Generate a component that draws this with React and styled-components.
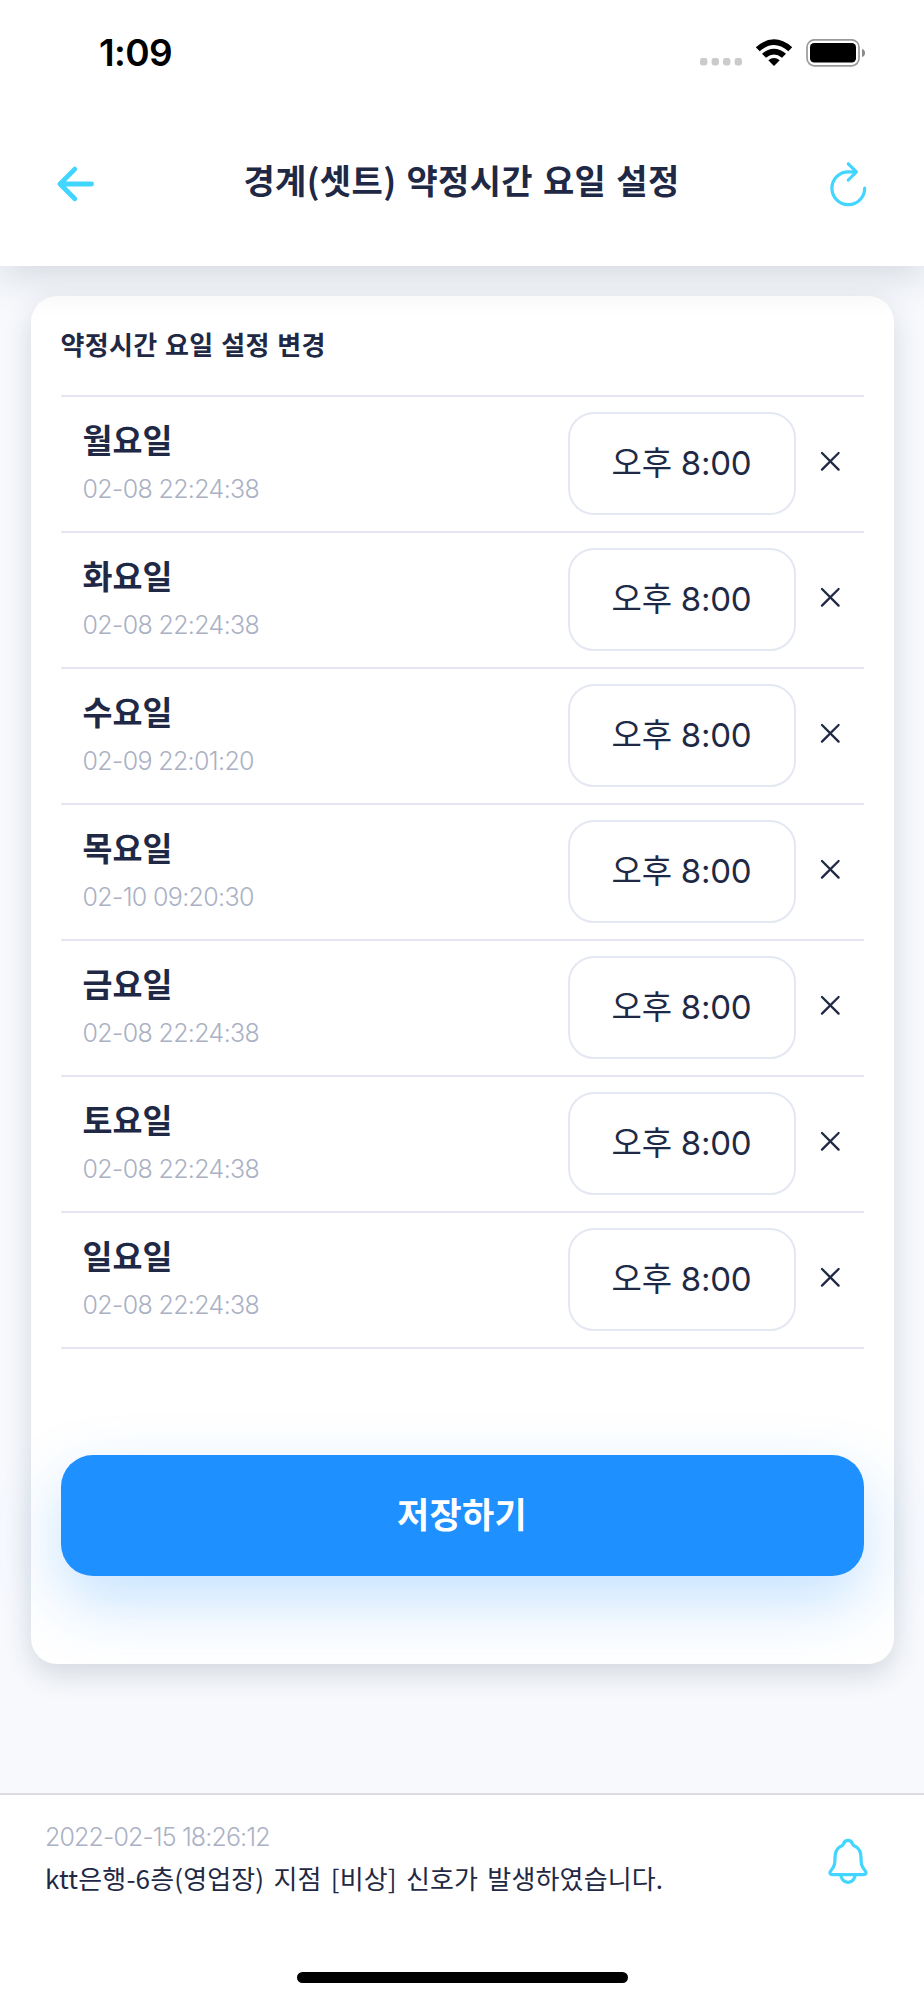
import React from 'react';
import styled, { createGlobalStyle } from 'styled-components';

const GlobalStyle = createGlobalStyle`
  body {
    margin: 0;
    background-color: #f7f9fd;
  }
  * {
    box-sizing: border-box;
  }
`;

const Screen = styled.div`
  display: flex;
  flex-direction: column;
  width: 924px;
  height: 2000px;
  overflow: hidden;
  color: #1f2945;
  background-color: #f7f9fd;
  font-family: 'Noto Sans CJK KR', 'Noto Sans', sans-serif;
`;

const Top = styled.header`
  position: relative;
  z-index: 1;
  height: 266px;
  background-color: #fff;
  box-shadow: 0 10px 38px rgba(31, 41, 55, 0.16);
`;

const StatusBar = styled.div`
  display: flex;
  justify-content: space-between;
  align-items: center;
  height: 106px;
  padding: 0 58px 0 99px;
`;

const Clock = styled.time`
  color: #000;
  font-family: Inter, sans-serif;
  font-size: 37px;
  font-weight: 600;
  line-height: 44px;
  letter-spacing: -0.6px;
`;

const TitleBar = styled.div`
  display: flex;
  justify-content: space-between;
  align-items: center;
  height: 156px;
  padding: 0 56px 0 54px;
`;

const Title = styled.h1`
  margin: 0 3px 8px 0;
  font-size: 34px;
  font-weight: 700;
  line-height: 50px;
  letter-spacing: 0.35px;
  word-spacing: 2px;
  white-space: nowrap;
`;

const IconButton = styled.button`
  display: flex;
  padding: 0;
  border: 0;
  background: none;
  color: ${(props) => props.$color || '#41d5ff'};
`;

const Card = styled.main`
  width: 863px;
  height: 1368px;
  margin: 30px 0 0 30.5px;
  padding: 0 30px;
  border-radius: 26px;
  background-color: #fff;
  box-shadow: 0 10px 28px rgba(31, 41, 55, 0.16);
`;

const CardTitle = styled.h2`
  display: flex;
  align-items: center;
  height: 98px;
  margin: 0 0 1px;
  padding-bottom: 3px;
  font-size: 26px;
  font-weight: 700;
  letter-spacing: 0.3px;
  word-spacing: 1.5px;
`;

const DayList = styled.ul`
  margin: 0;
  padding: 0;
  list-style: none;
  border-top: 2px solid #e4e5f0;
`;

const DayRow = styled.li`
  display: flex;
  align-items: center;
  height: 136px;
  padding: 0 23px 0 22px;
  border-bottom: 2px solid #e4e5f0;
`;

const DayInfo = styled.div`
  flex: 1;
  padding-bottom: 7px;
`;

const DayName = styled.div`
  margin-bottom: 8px;
  font-size: 32.6px;
  font-weight: 700;
  line-height: 48px;
`;

const Stamp = styled.div`
  color: #abb1c4;
  font-family: Inter, sans-serif;
  font-size: 25px;
  font-weight: 350;
  line-height: 36px;
  letter-spacing: ${(props) => props.$spacing || '-0.65px'};
`;

const TimeButton = styled.button`
  width: 228px;
  height: 103px;
  margin: 0 24px 1px 0;
  padding: 0 0 5px;
  border: 2px solid #e4e8f3;
  border-radius: 26px;
  background-color: #fff;
  color: inherit;
  font-family: Inter, 'Noto Sans CJK KR', sans-serif;
  font-size: 33px;
  font-weight: 400;
  letter-spacing: -0.25px;
`;

const Remove = styled(IconButton)`
  margin-bottom: 5px;
`;

const SaveButton = styled.button`
  width: 803px;
  height: 121px;
  margin-top: 106px;
  padding: 0 0 6px;
  border: 0;
  border-radius: 32px;
  background-color: #1e90ff;
  box-shadow: 0 26px 64px rgba(30, 144, 255, 0.26);
  color: #fff;
  font-family: inherit;
  font-size: 35px;
  font-weight: 700;
  letter-spacing: 0.3px;
`;

const Footer = styled.footer`
  display: flex;
  flex-direction: column;
  height: 207px;
  margin-top: auto;
  border-top: 2px solid #dcdcdf;
  background-color: #fff;
`;

const Notice = styled.div`
  display: flex;
  justify-content: space-between;
  align-items: center;
  height: 132px;
  padding: 0 56px 0 45px;
`;

const NoticeText = styled.div`
  padding-bottom: 2px;
`;

const Message = styled.p`
  margin: 0;
  font-size: 26px;
  font-weight: 400;
  line-height: 46px;
  letter-spacing: 0.15px;
  word-spacing: 3.2px;
  white-space: nowrap;
`;

const HomeIndicator = styled.div`
  width: 331px;
  height: 11px;
  margin: 45px auto 0;
  border-radius: 6px;
  background-color: #000;
`;

const days = [
  { id: 1, name: '월요일', updated: '02-08 22:24:38' },
  { id: 2, name: '화요일', updated: '02-08 22:24:38' },
  { id: 3, name: '수요일', updated: '02-09 22:01:20' },
  { id: 4, name: '목요일', updated: '02-10 09:20:30' },
  { id: 5, name: '금요일', updated: '02-08 22:24:38' },
  { id: 6, name: '토요일', updated: '02-08 22:24:38' },
  { id: 7, name: '일요일', updated: '02-08 22:24:38' },
];

const StatusIcons = () => (
  <svg width="166" height="28" viewBox="0 0 166 28">
    {[0, 11.6, 23, 34.6].map((x) => (
      <rect key={x} x={x} y="19" width="7.4" height="7.4" rx="2.4" fill="#cbcbcb" />
    ))}
    <path d="M55.8 8.2 Q74 -7.5 92.2 8.2 L88.3 12.3 Q74 -0.2 59.7 12.3 Z" />
    <path d="M62 14.7 Q74 4.6 86 14.7 L82 18.8 Q74 12.2 66 18.8 Z" />
    <path d="M68.3 21.2 Q74 16.8 79.7 21.2 L74 27 Z" />
    <rect x="107" y="0.8" width="52" height="26" rx="7.5" fill="none" stroke="#999" strokeWidth="1.7" />
    <rect x="110" y="4" width="46" height="19.6" rx="4.2" />
    <path d="M162 10 Q165 11 165 13.9 Q165 17 162 18 Z" fill="#8a8a8a" />
  </svg>
);

const BackIcon = () => (
  <svg width="44" height="38" viewBox="0 0 44 38" fill="none" stroke="currentColor" strokeWidth="4.8" strokeLinecap="round" strokeLinejoin="round">
    <path d="M20.8 4.1 L6 19 L20.8 33.8 M6 19 H37.6" />
  </svg>
);

const RefreshIcon = () => (
  <svg width="40" height="46" viewBox="0 0 40 46" fill="none" stroke="currentColor" strokeWidth="3.2" strokeLinecap="round" strokeLinejoin="round">
    <path d="M27.5 10.8 H20.3 A16.4 16.4 0 1 0 36.7 27.2" />
    <path d="M20.3 2.8 L28.4 10.8 L20.3 19" />
  </svg>
);

const CloseIcon = () => (
  <svg width="21" height="21" viewBox="0 0 21 21" stroke="currentColor" strokeWidth="2.3" strokeLinecap="round">
    <path d="M2 2 L18.6 18.6 M18.6 2 L2 18.6" />
  </svg>
);

const BellIcon = () => (
  <svg width="40" height="46" viewBox="0 0 40 46" fill="none" stroke="currentColor" strokeWidth="3.2" strokeLinejoin="round">
    <path d="M15.3 6.3 C16.8 1.1 23.2 1.1 24.7 6.3 C25.2 7.5 26.2 7.7 27.4 8.4 C31.5 10.7 33 14.2 33 19.3 C33 26 33.4 28.2 37 32.5 C39 34.9 37.8 36.7 35.5 36.7 H4.5 C2.2 36.7 1 34.9 3 32.5 C6.6 28.2 7 26 7 19.3 C7 14.2 8.5 10.7 12.6 8.4 C13.8 7.7 14.8 7.5 15.3 6.3 Z" />
    <path d="M12.9 37 A7.1 7.4 0 0 0 27.1 37" />
  </svg>
);

const App = () => (
  <>
    <GlobalStyle />
    <Screen>
      <Top>
        <StatusBar>
          <Clock>1:09</Clock>
          <StatusIcons />
        </StatusBar>
        <TitleBar>
          <IconButton type="button" aria-label="뒤로"><BackIcon /></IconButton>
          <Title>경계(셋트) 약정시간 요일 설정</Title>
          <IconButton type="button" aria-label="새로고침"><RefreshIcon /></IconButton>
        </TitleBar>
      </Top>
      <Card>
        <CardTitle>약정시간 요일 설정 변경</CardTitle>
        <DayList>
          {days.map(({ id, name, updated }) => (
            <DayRow key={id}>
              <DayInfo>
                <DayName>{name}</DayName>
                <Stamp>{updated}</Stamp>
              </DayInfo>
              <TimeButton type="button">오후 8:00</TimeButton>
              <Remove type="button" aria-label="삭제" $color="#1f2945"><CloseIcon /></Remove>
            </DayRow>
          ))}
        </DayList>
        <SaveButton type="button">저장하기</SaveButton>
      </Card>
      <Footer>
        <Notice>
          <NoticeText>
            <Stamp $spacing="-0.88px">2022-02-15 18:26:12</Stamp>
            <Message>ktt은행-6층(영업장) 지점 [비상] 신호가 발생하였습니다.</Message>
          </NoticeText>
          <IconButton type="button" aria-label="알림"><BellIcon /></IconButton>
        </Notice>
        <HomeIndicator />
      </Footer>
    </Screen>
  </>
);

export default App;
